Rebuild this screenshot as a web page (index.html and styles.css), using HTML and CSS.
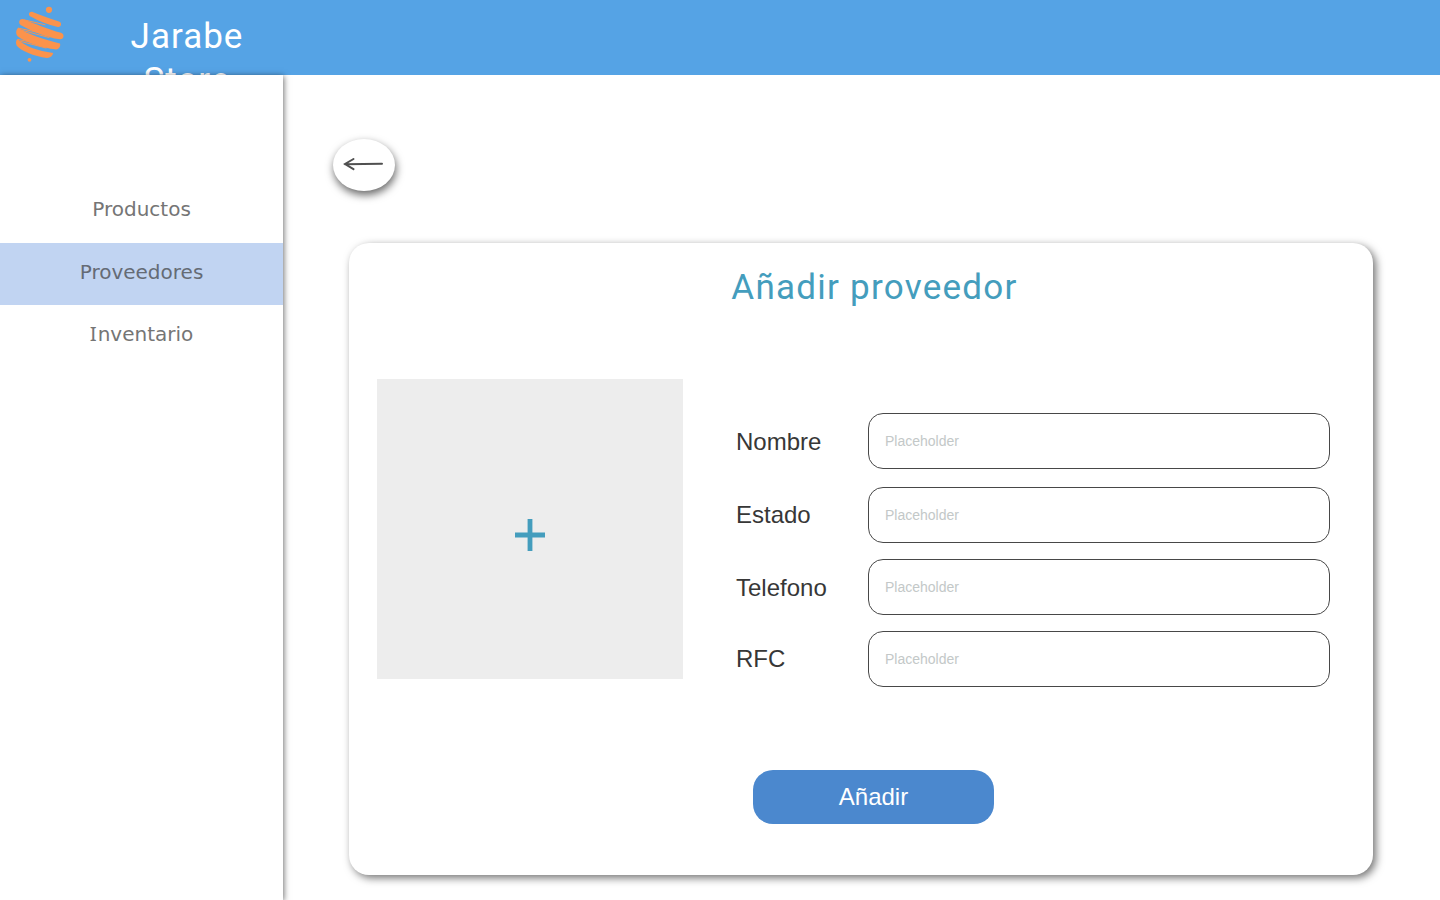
FILE: index.html
```html
<!DOCTYPE html>
<html lang="es">
<head>
<meta charset="utf-8">
<title>Jarabe Store</title>
<link rel="stylesheet" href="styles.css">
</head>
<body>
<header class="topbar">
  <svg class="logo" viewBox="0 0 80 75" width="80" height="75" fill="#fb934c" stroke="none">
    <circle cx="49" cy="9.8" r="3.1"/>
    <circle cx="29.5" cy="59.8" r="1.9"/>
    <path d="M32 11.8 C40 15 50 18.8 59 21.4 C62.3 22.6 61.5 27.4 57.8 26.9 C48 25 38 20.5 30 16.2 C28 14.6 29 11.5 32 11.8Z"/>
    <path d="M22.5 19 C34 23 48 29.5 61 32.8 C65 34.2 64 39.6 60 39.3 C46 37.5 30 30.5 20.5 25 C18 22.5 19.5 18.8 22.5 19Z"/>
    <path d="M18.5 27.8 C26 33.8 45 39.8 60 43.4 C60.8 45.5 59.5 49.3 56 49.4 C42 48 23 41.5 17 35.5 C15.5 32.5 16.3 29 18.5 27.8Z"/>
    <path d="M17.5 39 C24 46 38 51 53.2 53 C52.5 56 50.5 57.9 47 58 C34 56.5 20.5 50.5 16.8 45.8 C15.5 43 15.8 40.5 17.5 39Z"/>
    <path fill="none" stroke="#fb934c" stroke-width="1" stroke-linecap="round" d="M34 16.8 L54 24.4 M24 19.8 L45 24.8 M18.5 28.2 L41 33 M20 29.8 L49 37.5 M18 39.5 L36 43 M20 41.2 L46 48"/>
  </svg>
  <div class="brand">Jarabe Store</div>
</header>
<div class="body">
  <nav class="sidebar">
    <a class="nav-item">Productos</a>
    <a class="nav-item active">Proveedores</a>
    <a class="nav-item inventory">Inventario</a>
  </nav>
  <main class="content">
    <button class="back" aria-label="Volver">
      <svg width="62" height="52" viewBox="0 0 62 52" fill="none" stroke="#505050" stroke-width="2" stroke-linecap="round"><path d="M12 25.3 L49 24.7 M20.5 20 L12 25 L20.5 30.2"/></svg>
    </button>
    <section class="card">
      <h1 class="title">Añadir proveedor</h1>
      <div class="columns">
        <div class="upload"><svg width="32" height="34" viewBox="0 0 32 34"><path d="M1 17H31M16 1V33" stroke="#449dbd" stroke-width="4.8"/></svg></div>
        <form class="form">
          <label class="field"><span class="label">Nombre</span><input class="input" placeholder="Placeholder"></label>
          <label class="field field-state"><span class="label">Estado</span><input class="input" placeholder="Placeholder"></label>
          <label class="field"><span class="label">Telefono</span><input class="input" placeholder="Placeholder"></label>
          <label class="field"><span class="label label-rfc">RFC</span><input class="input" placeholder="Placeholder"></label>
        </form>
      </div>
      <button class="submit">Añadir</button>
    </section>
  </main>
</div>
</body>
</html>
```
FILE: styles.css
```css
* { box-sizing: border-box; }
body { margin: 0; height: 900px; overflow: hidden; background: #fff; font-family: "Liberation Sans", Arial, sans-serif; }
.topbar { height: 75px; background: #55a3e5; display: flex; }
.logo { flex: none; }
.brand { width: 180px; margin-left: 17px; padding-top: 15px; height: 75px; text-align: center; color: #fff; font: 35px/44px Roboto, sans-serif; letter-spacing: 1px; }
.body { display: flex; height: 825px; position: relative; background: #fff; }
.sidebar { width: 283px; flex: none; padding-top: 105px; background: #fff; box-shadow: 1px 1px 6px rgba(0,0,0,.55); display: flex; flex-direction: column; }
.nav-item { height: 62.5px; padding-top: 15px; text-align: center; font: 20px/28px Verdana, "DejaVu Sans", sans-serif; color: #757575; }
.inventory { padding-top: 14px; }
.inventory::first-letter { font-family: Verdana, "Noto Sans", sans-serif; font-size: 20.5px; letter-spacing: 1px; }
.active { background: #c1d4f2; color: #656b75; }
.content { flex: 1; padding: 64px 67px 0 50px; }
.back { display: block; width: 62px; height: 52px; padding: 0; border: 0; border-radius: 50%; background: #fff; box-shadow: 1px 4px 8px rgba(0,0,0,.6); }
.back svg { display: block; }
.card { width: 1024px; height: 632px; margin: 52px 0 0 16px; border-radius: 20px; background: #fff; box-shadow: 3px 3px 8px rgba(0,0,0,.55); }
.title { margin: 0; padding: 23px 0 0 27px; height: 136px; text-align: center; color: #449dbd; font: 400 35px/44px Roboto, sans-serif; letter-spacing: 1.25px; }
.columns { display: flex; padding-left: 28px; }
.upload { width: 306px; height: 300px; background: #ededed; display: flex; align-items: center; justify-content: center; padding-top: 12px; }
.form { margin-left: 53px; padding-top: 34px; display: flex; flex-direction: column; gap: 16px; }
.field { display: flex; align-items: center; }
.field-state { margin-top: 2px; }
.label { width: 132px; font-size: 24px; line-height: 28px; color: #373737; padding-top: 1px; }
.label-rfc, .field-state .label { padding-top: 0; padding-bottom: 1px; }
.input { width: 462px; height: 56px; border: 1px solid #484848; border-radius: 15px; background: #fff; padding: 0 16px; font: 14px "Liberation Sans", Arial, sans-serif; }
.input::placeholder { color: #c3c8c8; opacity: 1; }
.submit { display: block; width: 241px; height: 54px; margin: 83px 0 0 404px; padding: 0; border: 0; border-radius: 20px; background: #4b88ce; color: #fff; font: 24px "Liberation Sans", Arial, sans-serif; }
```
